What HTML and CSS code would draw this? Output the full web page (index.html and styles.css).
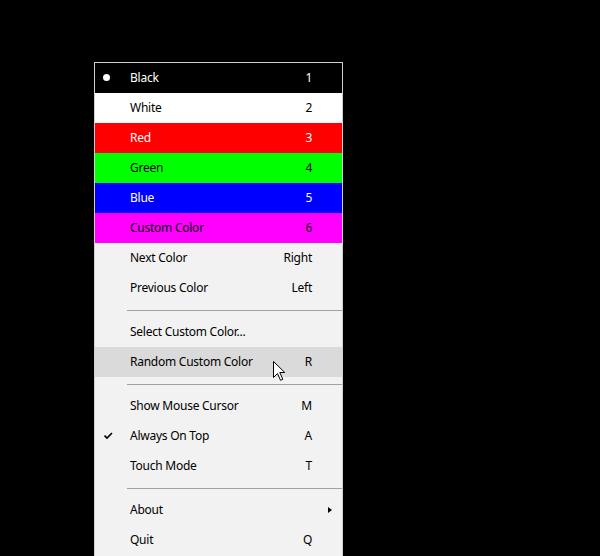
FILE: index.html
```html
<!DOCTYPE html>
<html>
<head>
<meta charset="utf-8">
<link rel="stylesheet" href="styles.css">
</head>
<body>
<div class="stage">
  <div class="menu">
    <div class="item c-black"><span class="ico"><span class="dot"></span></span><span class="label">Black</span><span class="key">1</span><span class="sub"></span></div>
    <div class="item c-white"><span class="ico"></span><span class="label">White</span><span class="key">2</span><span class="sub"></span></div>
    <div class="item c-red"><span class="ico"></span><span class="label">Red</span><span class="key">3</span><span class="sub"></span></div>
    <div class="item c-green"><span class="ico"></span><span class="label">Green</span><span class="key">4</span><span class="sub"></span></div>
    <div class="item c-blue"><span class="ico"></span><span class="label">Blue</span><span class="key">5</span><span class="sub"></span></div>
    <div class="item c-magenta"><span class="ico"></span><span class="label">Custom Color</span><span class="key">6</span><span class="sub"></span></div>
    <div class="item"><span class="ico"></span><span class="label">Next Color</span><span class="key">Right</span><span class="sub"></span></div>
    <div class="item"><span class="ico"></span><span class="label">Previous Color</span><span class="key">Left</span><span class="sub"></span></div>
    <div class="sep"></div>
    <div class="item"><span class="ico"></span><span class="label">Select Custom Color...</span><span class="key"></span><span class="sub"></span></div>
    <div class="item hover"><span class="ico"></span><span class="label">Random Custom Color</span><span class="key">R</span><span class="sub"></span>
      <svg class="cursor" width="13" height="20" viewBox="0 0 13 20"><path d="M0.5 0.5 L0.5 16.5 L4.5 12.5 L7.5 19.3 L9.8 18.3 L6.8 11.5 L11.8 11.5 Z" fill="#fff" stroke="#000" stroke-width="1" stroke-linejoin="miter"/></svg>
    </div>
    <div class="sep"></div>
    <div class="item"><span class="ico"></span><span class="label">Show Mouse Cursor</span><span class="key">M</span><span class="sub"></span></div>
    <div class="item"><span class="ico"><svg class="check" width="9" height="8" viewBox="0 0 9 8"><path d="M0.5 3.5 L3 6 L8 1" fill="none" stroke="#000" stroke-width="1.6"/></svg></span><span class="label">Always On Top</span><span class="key">A</span><span class="sub"></span></div>
    <div class="item"><span class="ico"></span><span class="label">Touch Mode</span><span class="key">T</span><span class="sub"></span></div>
    <div class="sep"></div>
    <div class="item"><span class="ico"></span><span class="label">About</span><span class="key"></span><span class="sub"><span class="arrow"></span></span></div>
    <div class="item"><span class="ico"></span><span class="label">Quit</span><span class="key">Q</span><span class="sub"></span></div>
  </div>
</div>
</body>
</html>
```

FILE: styles.css
```css
html, body {
  margin: 0;
  padding: 0;
  background: #000;
  overflow: hidden;
  height: 556px;
}
.stage {
  padding: 62px 0 0 94px;
}
.menu {
  width: 247px;
  border: 1px solid #d0d0d0;
  background: #f2f2f2;
  padding-bottom: 4px;
  font-family: "Noto Sans", "DejaVu Sans", sans-serif;
  font-size: 12px;
  letter-spacing: -0.25px;
  color: #000;
}
.item {
  position: relative;
  display: grid;
  grid-template-columns: 35px 1fr auto 30px;
  align-items: center;
  height: 30px;
  line-height: 16px;
}
.ico {
  position: relative;
  height: 30px;
}
.dot {
  position: absolute;
  left: 8px;
  top: 11px;
  width: 7px;
  height: 7px;
  border-radius: 50%;
  background: #fff;
}
.check {
  position: absolute;
  left: 9px;
  top: 11px;
}
.label {
  white-space: nowrap;
}
.key {
  text-align: right;
  white-space: nowrap;
}
.sub {
  position: relative;
  height: 30px;
}
.arrow {
  position: absolute;
  left: 16px;
  top: 12px;
  width: 0;
  height: 0;
  border-top: 3.5px solid transparent;
  border-bottom: 3.5px solid transparent;
  border-left: 4px solid #000;
}
.sep {
  height: 14px;
  display: flex;
  align-items: center;
  padding-left: 32px;
}
.sep::before {
  content: "";
  display: block;
  flex: 1;
  height: 1px;
  background: #a0a0a0;
}
.hover {
  background: #dadada;
}
.cursor {
  position: absolute;
  left: 178px;
  top: 14px;
}
.c-black { background: #000; color: #fff; }
.c-white { background: #fff; color: #000; }
.c-red { background: #ff0000; color: #fff; }
.c-green { background: #00ff00; color: #000; }
.c-blue { background: #0000ff; color: #fff; }
.c-magenta { background: #ff00ff; color: #000; }
```
